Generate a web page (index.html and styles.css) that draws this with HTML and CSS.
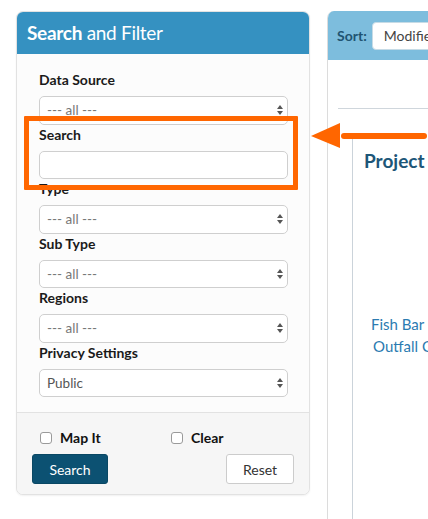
FILE: index.html
```html
<!DOCTYPE html>
<html lang="en">
<head>
<meta charset="utf-8">
<title>Search and Filter</title>
<link rel="stylesheet" href="styles.css">
</head>
<body>
<div class="page">
  <aside class="filter-panel">
    <div class="panel-head"><h2><span class="strong">Search</span> and Filter</h2></div>
    <form class="panel-body">
      <div class="field">
        <label class="field-label">Data Source</label>
        <div class="select-wrap">
          <select class="control"><option>--- all ---</option></select>
          <svg class="updown" viewBox="0 0 8 12" width="8" height="12"><path d="M4 1 L7 5 L1 5 Z M4 11 L7 7 L1 7 Z"/></svg>
        </div>
      </div>
      <div class="field">
        <label class="field-label">Search</label>
        <input class="control" type="text">
      </div>
      <div class="field">
        <label class="field-label">Type</label>
        <div class="select-wrap">
          <select class="control"><option>--- all ---</option></select>
          <svg class="updown" viewBox="0 0 8 12" width="8" height="12"><path d="M4 1 L7 5 L1 5 Z M4 11 L7 7 L1 7 Z"/></svg>
        </div>
      </div>
      <div class="field">
        <label class="field-label">Sub Type</label>
        <div class="select-wrap">
          <select class="control"><option>--- all ---</option></select>
          <svg class="updown" viewBox="0 0 8 12" width="8" height="12"><path d="M4 1 L7 5 L1 5 Z M4 11 L7 7 L1 7 Z"/></svg>
        </div>
      </div>
      <div class="field">
        <label class="field-label">Regions</label>
        <div class="select-wrap">
          <select class="control"><option>--- all ---</option></select>
          <svg class="updown" viewBox="0 0 8 12" width="8" height="12"><path d="M4 1 L7 5 L1 5 Z M4 11 L7 7 L1 7 Z"/></svg>
        </div>
      </div>
      <div class="field">
        <label class="field-label">Privacy Settings</label>
        <div class="select-wrap">
          <select class="control dark"><option>Public</option></select>
          <svg class="updown" viewBox="0 0 8 12" width="8" height="12"><path d="M4 1 L7 5 L1 5 Z M4 11 L7 7 L1 7 Z"/></svg>
        </div>
      </div>
    </form>
    <div class="panel-foot">
      <div class="checks">
        <label class="check"><input type="checkbox"><span>Map It</span></label>
        <label class="check"><input type="checkbox"><span>Clear</span></label>
      </div>
      <div class="buttons">
        <button class="btn btn-primary" type="button">Search</button>
        <button class="btn btn-default" type="button">Reset</button>
      </div>
    </div>
  </aside>

  <section class="results">
    <div class="results-head">
      <span class="sort-label">Sort:</span>
      <div class="sort-select">Modified Date</div>
    </div>
    <div class="results-body">
      <div class="toolbar"></div>
      <div class="table">
        <div class="th">Project</div>
        <div class="td">
          <a class="link line1" href="#">Fish Bar Creek</a>
          <a class="link line2" href="#">Outfall Channel</a>
        </div>
      </div>
    </div>
  </section>

  <div class="callout-box"></div>
  <svg class="callout-arrow" width="124" height="36" viewBox="0 0 124 36">
    <line x1="36" y1="18" x2="116" y2="18" stroke="#ff6600" stroke-width="6" stroke-linecap="round"/>
    <polygon points="3,18 32,5 32,30" fill="#ff6600"/>
  </svg>
</div>
</body>
</html>
```

FILE: styles.css
```css
html, body {
  margin: 0;
  padding: 0;
  overflow: hidden;
  background: #ffffff;
}
body {
  font-family: Lato, "Open Sans", "Liberation Sans", sans-serif;
  color: #222;
}
.page {
  position: relative;
  display: flex;
  align-items: flex-start;
  gap: 17px;
  padding: 11px 0 0 16px;
  width: 760px;
  height: 519px;
  box-sizing: border-box;
}

/* ---------- Filter panel ---------- */
.filter-panel {
  width: 294px;
  flex: none;
  border: 1px solid #e2e2e2;
  border-radius: 7px;
  background: #fcfcfc;
  box-shadow: 0 1px 2px rgba(0,0,0,0.06);
  overflow: hidden;
  box-sizing: border-box;
}
.panel-head {
  background: #3591c1;
  height: 43px;
  padding-left: 11px;
  margin: -1px -1px 0 -1px;
}
.panel-head h2 {
  margin: 0;
  font-size: 19px;
  line-height: 43px;
  font-weight: 400;
  color: #ffffff;
  letter-spacing: -0.3px;
}
.panel-head .strong { font-weight: 700; }

.panel-body {
  padding: 16px 21px 15px 22px;
  display: flex;
  flex-direction: column;
}
.field { display: flex; flex-direction: column; }
.field-label {
  font-size: 14px;
  line-height: 20px;
  font-weight: 700;
  color: #1a1a1a;
  margin-bottom: 6px;
}
.control {
  display: block;
  width: 100%;
  height: 28.5px;
  box-sizing: border-box;
  border: 1px solid #cfcfcf;
  border-radius: 5px;
  background: #ffffff;
  font-family: Lato, "Open Sans", "Liberation Sans", sans-serif;
  font-size: 13.5px;
  color: #777;
  padding: 0 7px;
  margin: 0;
  appearance: none;
  -webkit-appearance: none;
  outline: none;
}
.control.dark { color: #555; }
.select-wrap { position: relative; }
.updown {
  position: absolute;
  right: 4px;
  top: 8px;
  fill: #555;
}

.panel-foot {
  border-top: 1px solid #e2e2e2;
  background: #f6f6f6;
  padding: 15px 15px 10px 15px;
}
.checks {
  display: grid;
  grid-template-columns: 1fr 1fr;
}
.check {
  display: flex;
  align-items: center;
  gap: 8px;
  padding-left: 8px;
  font-size: 14px;
  line-height: 20px;
  font-weight: 700;
  color: #111;
}
.check input {
  appearance: none;
  -webkit-appearance: none;
  width: 12px;
  height: 12px;
  margin: 0;
  border: 1px solid #9a9a9a;
  border-radius: 3px;
  background: #fff;
}
.buttons {
  display: flex;
  justify-content: space-between;
  margin-top: 6px;
}
.btn {
  height: 30px;
  box-sizing: border-box;
  font-family: Lato, "Open Sans", "Liberation Sans", sans-serif;
  font-size: 14px;
  border-radius: 3px;
  padding: 0;
}
.btn-primary {
  width: 76px;
  background: #0c5172;
  border: 1px solid #0a4864;
  color: #ffffff;
}
.btn-default {
  width: 68px;
  background: #ffffff;
  border: 1px solid #cccccc;
  color: #333;
}

/* ---------- Results panel ---------- */
.results {
  width: 420px;
  flex: none;
  height: 560px;
  border-left: 1px solid #dcdcdc;
  border-radius: 7px 0 0 0;
  background: #ffffff;
  overflow: hidden;
}
.results-head {
  background: #7dbddd;
  height: 49px;
  display: flex;
  align-items: center;
  padding-left: 9px;
  gap: 5px;
}
.sort-label {
  font-size: 14px;
  font-weight: 700;
  color: #1f5472;
}
.sort-select {
  height: 28px;
  box-sizing: border-box;
  background: #fff;
  border: 1px solid #c6dbe6;
  border-radius: 4px;
  padding: 0 11px;
  font-size: 14px;
  line-height: 26px;
  color: #444;
  white-space: nowrap;
  width: 200px;
}
.results-body {
  padding-left: 10px;
}
.toolbar {
  height: 48px;
  border-bottom: 1px solid #cfd6dc;
}
.table {
  margin-left: 14px;
  margin-top: 27px;
  border-left: 1px solid #cbd3da;
}
.th {
  padding: 13px 0 0 11px;
  font-size: 19px;
  font-weight: 700;
  color: #1d5678;
  line-height: 24px;
}
.td {
  padding: 140px 0 0 18px;
  height: 260px;
}
.link {
  display: block;
  font-size: 15px;
  line-height: 22px;
  color: #2b7bb1;
  text-decoration: none;
  white-space: nowrap;
}
.link.line2 { padding-left: 2px; }

/* ---------- Annotation overlays ---------- */
.callout-box {
  position: absolute;
  left: 24px;
  top: 116px;
  width: 274px;
  height: 74px;
  box-sizing: border-box;
  border: 5.5px solid #ff6600;
  border-radius: 1px;
}
.callout-arrow {
  position: absolute;
  left: 308px;
  top: 118px;
}
```
